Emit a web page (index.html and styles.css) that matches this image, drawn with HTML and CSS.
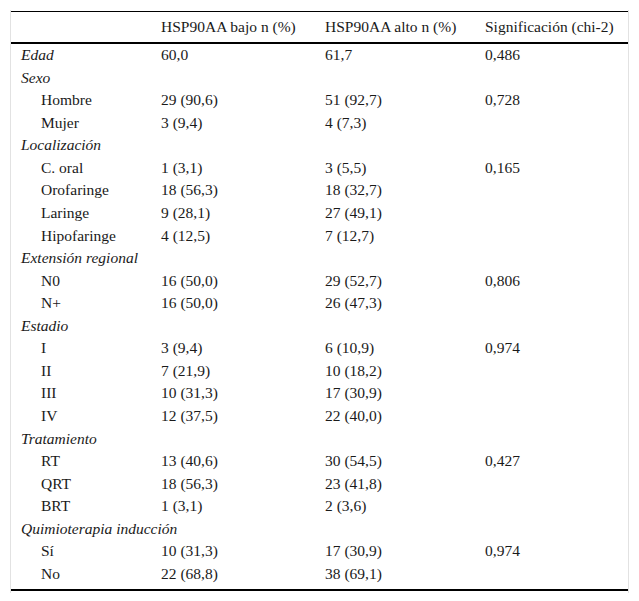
FILE: index.html
```html
<!DOCTYPE html>
<html lang="es">
<head>
<meta charset="utf-8">
<title>HSP90AA</title>
<link rel="stylesheet" href="styles.css">
</head>
<body>
<div class="frame">
<table class="data">
<colgroup>
<col class="c1"><col class="c2"><col class="c3"><col class="c4">
</colgroup>
<thead>
<tr><th></th><th>HSP90AA bajo n (%)</th><th>HSP90AA alto n (%)</th><th>Significación (chi-2)</th></tr>
</thead>
<tbody>
<tr><td class="grp">Edad</td><td>60,0</td><td>61,7</td><td>0,486</td></tr>
<tr><td class="grp">Sexo</td><td></td><td></td><td></td></tr>
<tr><td class="sub">Hombre</td><td>29 (90,6)</td><td>51 (92,7)</td><td>0,728</td></tr>
<tr><td class="sub">Mujer</td><td>3 (9,4)</td><td>4 (7,3)</td><td></td></tr>
<tr><td class="grp">Localización</td><td></td><td></td><td></td></tr>
<tr><td class="sub">C. oral</td><td>1 (3,1)</td><td>3 (5,5)</td><td>0,165</td></tr>
<tr><td class="sub">Orofaringe</td><td>18 (56,3)</td><td>18 (32,7)</td><td></td></tr>
<tr><td class="sub">Laringe</td><td>9 (28,1)</td><td>27 (49,1)</td><td></td></tr>
<tr><td class="sub">Hipofaringe</td><td>4 (12,5)</td><td>7 (12,7)</td><td></td></tr>
<tr><td class="grp">Extensión regional</td><td></td><td></td><td></td></tr>
<tr><td class="sub">N0</td><td>16 (50,0)</td><td>29 (52,7)</td><td>0,806</td></tr>
<tr><td class="sub">N+</td><td>16 (50,0)</td><td>26 (47,3)</td><td></td></tr>
<tr><td class="grp">Estadio</td><td></td><td></td><td></td></tr>
<tr><td class="sub">I</td><td>3 (9,4)</td><td>6 (10,9)</td><td>0,974</td></tr>
<tr><td class="sub">II</td><td>7 (21,9)</td><td>10 (18,2)</td><td></td></tr>
<tr><td class="sub">III</td><td>10 (31,3)</td><td>17 (30,9)</td><td></td></tr>
<tr><td class="sub">IV</td><td>12 (37,5)</td><td>22 (40,0)</td><td></td></tr>
<tr><td class="grp">Tratamiento</td><td></td><td></td><td></td></tr>
<tr><td class="sub">RT</td><td>13 (40,6)</td><td>30 (54,5)</td><td>0,427</td></tr>
<tr><td class="sub">QRT</td><td>18 (56,3)</td><td>23 (41,8)</td><td></td></tr>
<tr><td class="sub">BRT</td><td>1 (3,1)</td><td>2 (3,6)</td><td></td></tr>
<tr><td class="grp">Quimioterapia inducción</td><td></td><td></td><td></td></tr>
<tr><td class="sub">Sí</td><td>10 (31,3)</td><td>17 (30,9)</td><td>0,974</td></tr>
<tr class="last"><td class="sub">No</td><td>22 (68,8)</td><td>38 (69,1)</td><td></td></tr>
</tbody>
</table>
</div>
</body>
</html>
```

FILE: styles.css
```css
html, body {
  margin: 0;
  padding: 0;
  background: #fff;
}
body {
  font-family: "Liberation Serif", "Times New Roman", serif;
  font-size: 15.5px;
  color: #1a1a1a;
}
.frame {
  margin: 10px 0 0 10px;
  width: 617px;
  padding: 1px 0 2px;
  border-left: 1px solid #e2e2e2;
  border-right: 1px solid #e2e2e2;
}
.data {
  width: 617px;
  table-layout: fixed;
  border-collapse: collapse;
  border-top: 1px solid #000;
  border-bottom: 2px solid #000;
}
.c1 { width: 140px; }
.c2 { width: 164px; }
.c3 { width: 160px; }
.c4 { width: 153px; }
.data th {
  font-weight: normal;
  text-align: left;
  padding: 0 0 0 10px;
  height: 30px;
  line-height: 30px;
  border-bottom: 2px solid #000;
  white-space: nowrap;
}
.data td {
  padding: 0 0 0 10px;
  height: 22.57px;
  line-height: 22.57px;
  white-space: nowrap;
  vertical-align: middle;
}
.data td.grp {
  font-style: italic;
  overflow: visible;
}
.data td.sub {
  padding-left: 30px;
}
.data tr.last td {
  padding-bottom: 3px;
}
```
